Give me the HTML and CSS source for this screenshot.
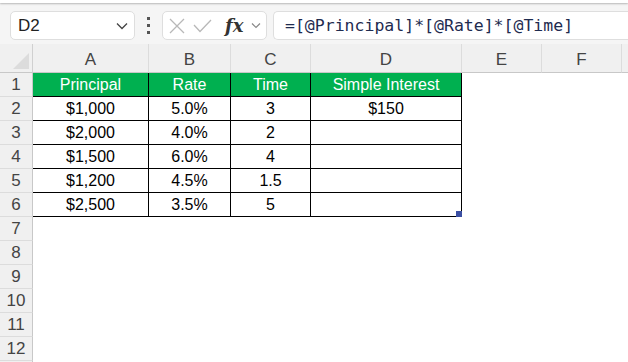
FILE: index.html
```html
<!DOCTYPE html>
<html lang="en">
<head>
  <meta charset="UTF-8">
  <title>Simple Interest</title>
  <link rel="stylesheet" href="styles.css">
</head>
<body>
  <div class="ribbon-edge"></div>
  <div class="formula-bar">
    <div class="name-box">
      <span>D2</span>
      <svg width="12" height="8" viewBox="0 0 12 8"><path d="M1 1.5 L6 6.5 L11 1.5" fill="none" stroke="#444" stroke-width="1.3"/></svg>
    </div>
    <div class="dots"><i></i><i></i><i></i></div>
    <div class="fx-box">
      <svg width="16" height="16" viewBox="0 0 16 16"><path d="M1 1 L15 15 M15 1 L1 15" stroke="#b8b8b8" stroke-width="1.3"/></svg>
      <svg width="19" height="14" viewBox="0 0 19 14"><path d="M1 6 L7 12.5 L18 1" fill="none" stroke="#b8b8b8" stroke-width="1.3"/></svg>
      <span class="fx">fx</span>
      <svg width="10" height="7" viewBox="0 0 10 7"><path d="M1 1.5 L5 5.5 L9 1.5" fill="none" stroke="#888" stroke-width="1.2"/></svg>
    </div>
    <div class="formula-input">=[@Principal]*[@Rate]*[@Time]</div>
  </div>

  <div class="sheet">
    <div class="corner"><div class="tri"></div></div>
    <div class="col-head">A</div>
    <div class="col-head">B</div>
    <div class="col-head">C</div>
    <div class="col-head">D</div>
    <div class="col-head">E</div>
    <div class="col-head">F</div>
    <div class="col-head last"></div>

    <div class="row-head">1</div>
    <div class="cell th">Principal</div>
    <div class="cell th">Rate</div>
    <div class="cell th">Time</div>
    <div class="cell th">Simple Interest</div>
    <div class="blank"></div><div class="blank"></div><div class="blank"></div>

    <div class="row-head">2</div>
    <div class="cell">$1,000</div>
    <div class="cell">5.0%</div>
    <div class="cell">3</div>
    <div class="cell">$150</div>
    <div class="blank"></div><div class="blank"></div><div class="blank"></div>

    <div class="row-head">3</div>
    <div class="cell">$2,000</div>
    <div class="cell">4.0%</div>
    <div class="cell">2</div>
    <div class="cell"></div>
    <div class="blank"></div><div class="blank"></div><div class="blank"></div>

    <div class="row-head">4</div>
    <div class="cell">$1,500</div>
    <div class="cell">6.0%</div>
    <div class="cell">4</div>
    <div class="cell"></div>
    <div class="blank"></div><div class="blank"></div><div class="blank"></div>

    <div class="row-head">5</div>
    <div class="cell">$1,200</div>
    <div class="cell">4.5%</div>
    <div class="cell">1.5</div>
    <div class="cell"></div>
    <div class="blank"></div><div class="blank"></div><div class="blank"></div>

    <div class="row-head">6</div>
    <div class="cell">$2,500</div>
    <div class="cell">3.5%</div>
    <div class="cell">5</div>
    <div class="cell handle-cell"><span class="fill-handle"></span></div>
    <div class="blank"></div><div class="blank"></div><div class="blank"></div>

    <div class="row-head">7</div><div class="empty-row"></div>
    <div class="row-head">8</div><div class="empty-row"></div>
    <div class="row-head">9</div><div class="empty-row"></div>
    <div class="row-head">10</div><div class="empty-row"></div>
    <div class="row-head">11</div><div class="empty-row"></div>
    <div class="row-head">12</div><div class="empty-row"></div>
    <div class="row-head"></div><div class="empty-row"></div>
  </div>
</body>
</html>
```

FILE: styles.css
```css
* {
  box-sizing: border-box;
}

body {
  margin: 0;
  font-family: "Liberation Sans", Arial, sans-serif;
  background-color: #fff;
  overflow: hidden;
}

.ribbon-edge {
  height: 3px;
  background-color: #fff;
  box-shadow: 0 1px 2px rgba(0, 0, 0, 0.25);
  position: relative;
}

.formula-bar {
  height: 41px;
  background-color: #f5f5f5;
  display: flex;
  align-items: flex-start;
  padding: 8px 0 0 10px;
}

.name-box,
.fx-box,
.formula-input {
  height: 29px;
  background-color: #fff;
  border: 1px solid #dedede;
  border-radius: 5px;
  display: flex;
  align-items: center;
}

.name-box {
  width: 125px;
  padding: 0 6px 0 7px;
  justify-content: space-between;
  font-size: 17px;
  color: #222;
}

.dots {
  width: 27px;
  display: flex;
  flex-direction: column;
  align-items: center;
  gap: 4px;
  padding-top: 6px;
}

.dots i {
  width: 3px;
  height: 3px;
  background-color: #555;
}

.fx-box {
  width: 105px;
  padding: 0 5px 0 6px;
  justify-content: space-between;
}

.fx {
  font-family: "DejaVu Serif", "Liberation Serif", serif;
  font-style: italic;
  font-weight: bold;
  font-size: 18px;
  color: #333;
  margin-left: 6px;
}

.formula-input {
  flex: 1;
  margin-left: 6px;
  border-right: none;
  border-radius: 5px 0 0 5px;
  padding-left: 11px;
  font-family: "DejaVu Sans Mono", "Liberation Mono", monospace;
  font-size: 16.5px;
  color: #1e2b4f;
}

.sheet {
  display: grid;
  grid-template-columns: 33px 116px 82px 80px 151px 80px 80px 1fr;
  grid-template-rows: 29px repeat(13, 24px);
  font-size: 16px;
}

.corner {
  background-color: #f0f0f0;
  border-right: 1px solid #d0d0d0;
  border-bottom: 1px solid #c8c8c8;
  position: relative;
}

.tri {
  position: absolute;
  right: 3px;
  bottom: 3px;
  width: 0;
  height: 0;
  border-left: 16px solid transparent;
  border-bottom: 16px solid #dcdcdc;
}

.col-head {
  background-color: #f0f0f0;
  border-right: 1px solid #dcdcdc;
  border-bottom: 1px solid #c8c8c8;
  color: #444;
  font-size: 17px;
  display: flex;
  align-items: flex-end;
  justify-content: center;
  padding-bottom: 2px;
}

.col-head.last {
  border-right: none;
}

.row-head {
  grid-column: 1;
  background-color: #f0f0f0;
  border-right: 1px solid #c8c8c8;
  border-bottom: 1px solid #dcdcdc;
  color: #444;
  font-size: 17px;
  display: flex;
  align-items: center;
  justify-content: center;
  padding-top: 1px;
}

.cell {
  border-right: 1px solid #000;
  border-bottom: 1px solid #000;
  display: flex;
  align-items: center;
  justify-content: center;
  color: #000;
  padding-top: 1px;
}

.cell.th {
  background-color: #00b050;
  color: #fff;
}

.handle-cell {
  position: relative;
}

.fill-handle {
  position: absolute;
  right: -1px;
  bottom: -1px;
  width: 6px;
  height: 6px;
  background-color: #3b4fa3;
}

.empty-row {
  grid-column: 2 / -1;
}
```
